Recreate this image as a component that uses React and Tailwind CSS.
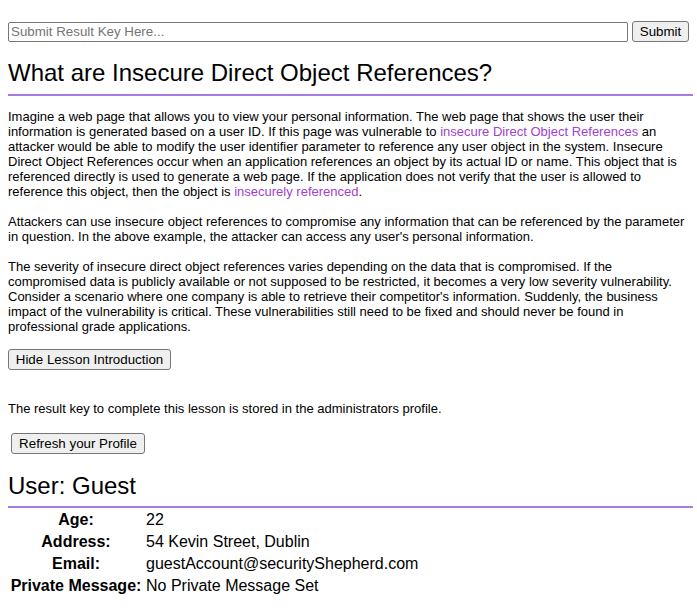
import React from "react";

const link = "text-[#a03fd0]";

export default function App() {
  return (
    <div className="min-h-screen bg-white text-black px-[8px] pt-[21px] pb-[8px]" style={{ fontFamily: '"Liberation Sans", Arial, sans-serif' }}>
      <div className="flex items-center gap-[4px] pr-[0px]">
        <input
          type="text"
          placeholder="Submit Result Key Here..."
          className="h-[20px] w-[620px] border border-[#767676] rounded-[2px] px-[2px] text-[13.33px] leading-[16px] placeholder:text-[#757575] outline-none"
        />
        <button className="h-[21px] w-[57px] border border-[#767676] rounded-[3px] bg-[#efefef] text-[13.33px] leading-[16px] text-black">
          Submit
        </button>
      </div>

      <h2 className="mt-[17px] text-[24px] leading-[28px] font-normal">What are Insecure Direct Object References?</h2>
      <div className="mt-[7px] h-[2px] w-[685px] bg-[#a77be6]" />

      <div className="mt-[13px] w-[681px] text-[13px] leading-[15px]">
        <p>
          Imagine a web page that allows you to view your personal information. The web page that shows the user their information is generated based on a user ID. If this page was vulnerable to{" "}
          <span className={link}>insecure Direct Object References</span> an attacker would be able to modify the user identifier parameter to reference any user object in the system. Insecure Direct Object References occur when an application references an object by its actual ID or name. This object that is referenced directly is used to generate a web page. If the application does not verify that the user is allowed to reference this object, then the object is{" "}
          <span className={link}>insecurely referenced</span>.
        </p>
        <p className="mt-[15px]">
          Attackers can use insecure object references to compromise any information that can be referenced by the parameter in question. In the above example, the attacker can access any user's personal information.
        </p>
        <p className="mt-[15px]">
          The severity of insecure direct object references varies depending on the data that is compromised. If the compromised data is publicly available or not supposed to be restricted, it becomes a very low severity vulnerability. Consider a scenario where one company is able to retrieve their competitor's information. Suddenly, the business impact of the vulnerability is critical. These vulnerabilities still need to be fixed and should never be found in professional grade applications.
        </p>
      </div>

      <button className="mt-[15px] block h-[21px] w-[163px] border border-[#767676] rounded-[3px] bg-[#efefef] text-[13.33px] leading-[16px]">
        Hide Lesson Introduction
      </button>

      <p className="mt-[31px] text-[13px] leading-[15px]">
        The result key to complete this lesson is stored in the administrators profile.
      </p>

      <button className="mt-[17px] ml-[3px] block h-[21px] w-[134px] border border-[#767676] rounded-[3px] bg-[#efefef] text-[13.33px] leading-[16px]">
        Refresh your Profile
      </button>

      <h2 className="mt-[18px] text-[24px] leading-[28px] font-normal">User: Guest</h2>
      <div className="mt-[6px] h-[2px] w-[685px] bg-[#a77be6]" />

      <div className="mt-[1px] grid grid-cols-[132px_1fr] gap-x-[4px] pl-[2px] text-[16px] leading-[18px]">
        {[
          ["Age:", "22"],
          ["Address:", "54 Kevin Street, Dublin"],
          ["Email:", "guestAccount@securityShepherd.com"],
          ["Private Message:", "No Private Message Set"],
        ].map(([k, v]) => (
          <React.Fragment key={k}>
            <div className="py-[2px] text-center font-bold whitespace-nowrap">{k}</div>
            <div className="py-[2px]">{v}</div>
          </React.Fragment>
        ))}
      </div>
    </div>
  );
}
